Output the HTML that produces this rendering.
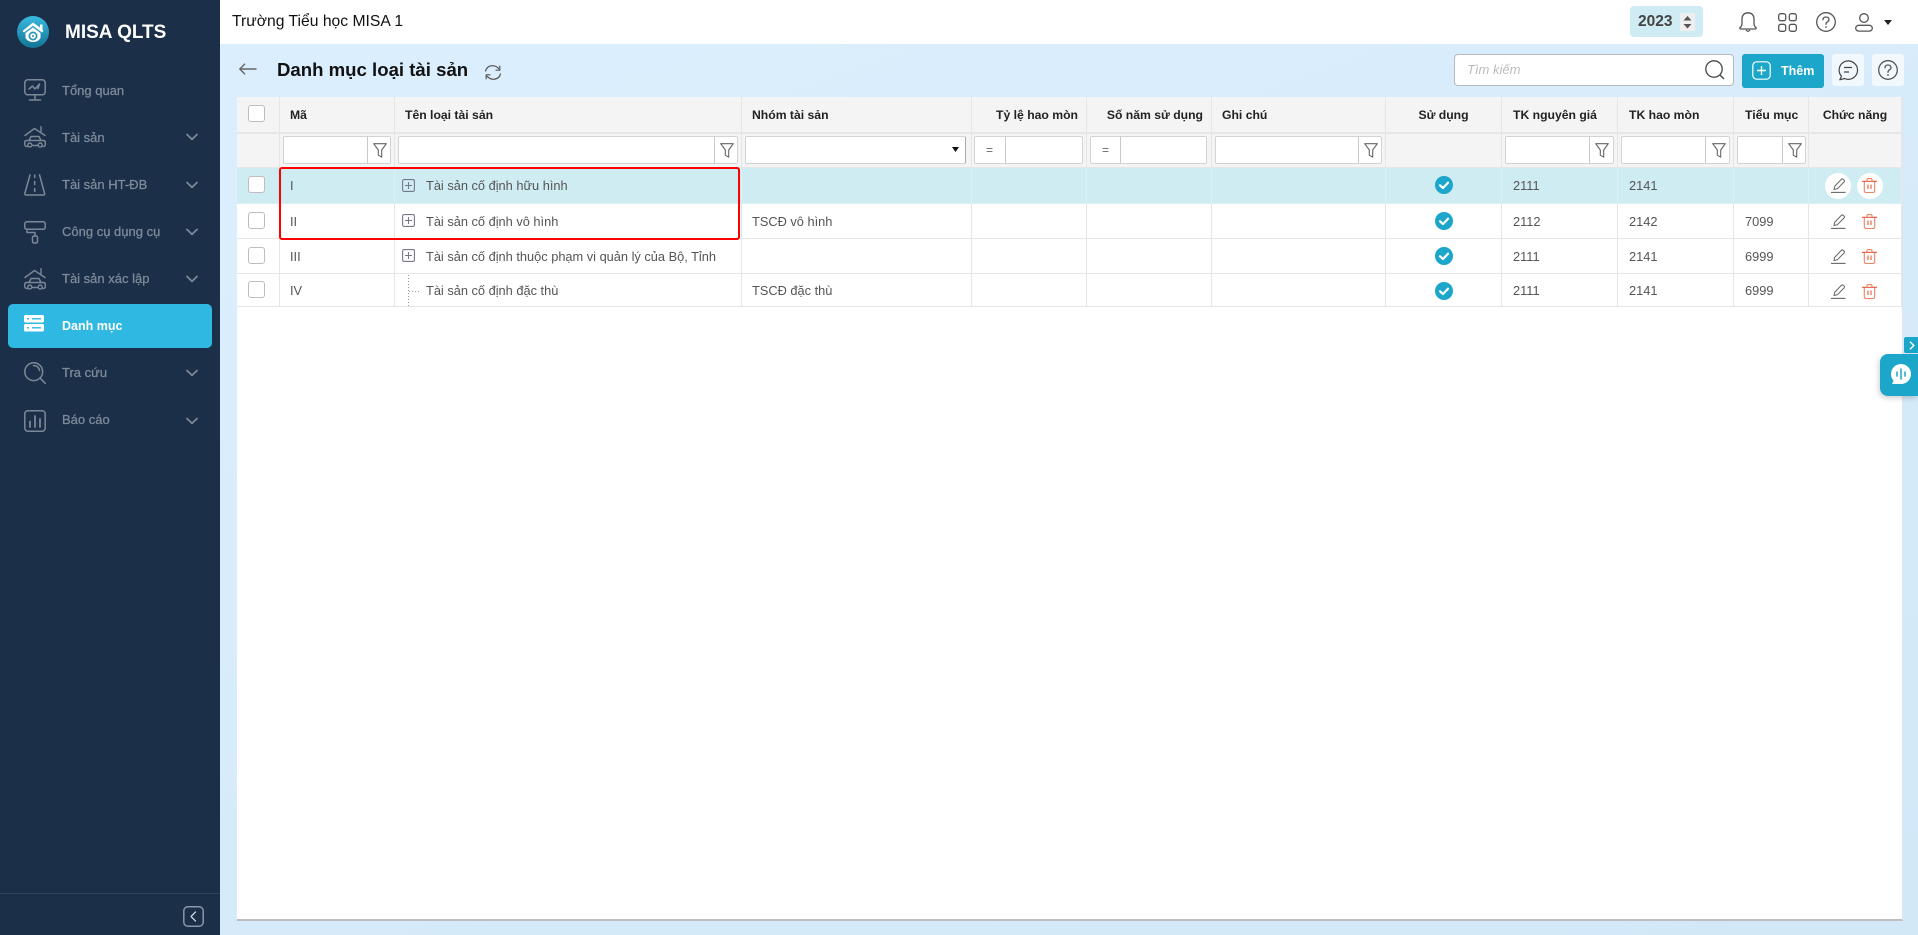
<!DOCTYPE html>
<html lang="vi">
<head>
<meta charset="utf-8">
<title>Danh mục loại tài sản</title>
<style>
*{box-sizing:border-box}
html,body{margin:0;padding:0}
body{position:relative;width:1918px;height:935px;overflow:hidden;background:linear-gradient(160deg,#dceffe,#d2e8f7);font-family:"Liberation Sans",sans-serif;color:#555}
.a{position:absolute}
.t{position:absolute;white-space:nowrap}
svg{position:absolute;overflow:visible;fill:none}
#side{left:0;top:0;width:220px;height:935px;background:#1b2f49}
.m{position:absolute;left:62px;font-size:13px;line-height:20px;color:#7f8b99;white-space:nowrap;-webkit-text-stroke:.25px #7f8b99}
.ic{stroke:#7c8896;stroke-width:1.5;stroke-linecap:round;stroke-linejoin:round}
#top{left:220px;top:0;width:1698px;height:44px;background:#fff}
#grid{position:absolute;left:237px;top:97px;width:1666px;height:824px;background:#fff;border-bottom:2px solid #bdbdbd;border-right:1px solid #e4e4e4}
table{border-collapse:separate;border-spacing:0;table-layout:fixed;width:1665px;font-size:12.8px}
td,th{padding:0 0 0 11px;border-right:1px solid #e6e6e6;border-bottom:1px solid #e6e6e6;white-space:nowrap;overflow:hidden;font-weight:400;text-align:left;vertical-align:middle;color:#555}
th{background:#f4f4f4;font-weight:700;color:#222;font-size:12.2px;border-bottom:2px solid #e6e6e6}
th:nth-child(3),th:nth-child(4),th:nth-child(7),td:nth-child(4){padding-left:10px}
.r{text-align:right;padding:0 8px 0 0}
.c{text-align:center;padding:0}
.fr td{background:#f4f4f4}
.sel td{background:#cfecf3;border-bottom-color:#d9eff5;border-right-color:#dbf0f5}
.f{position:absolute;top:136px;height:28px;background:#fff;border:1px solid #d3d3d3;border-radius:2px}
.f i{position:absolute;top:0;bottom:0;border-left:1px solid #c8c8c8}
.cb{position:absolute;left:248px;width:17px;height:17px;background:#fff;border:1px solid #bdbdbd;border-radius:3px}
.eq{position:absolute;top:142px;font-size:12px;line-height:16px;color:#666}
</style>
</head>
<body>
<svg width="0" height="0" style="position:absolute">
<defs>
<symbol id="fn" viewBox="0 0 14 15"><path d="M.7.7H13.3L8.7 7V14.2L5.3 12.2V7Z" fill="none" stroke="#666" stroke-width="1.1" stroke-linejoin="round"/></symbol>
<symbol id="pl" viewBox="0 0 13 13"><rect x=".6" y=".6" width="11.8" height="11.8" rx="1.5" fill="none" stroke="#77778c" stroke-width="1.1"/><path d="M6.5 3V10M3 6.5H10" stroke="#77778c" stroke-width="1.1"/></symbol>
<symbol id="ok" viewBox="0 0 18 18"><circle cx="9" cy="9" r="9" fill="#1ca6cb"/><path d="M5 9.3L8 12L13 6.7" fill="none" stroke="#fff" stroke-width="2.2" stroke-linecap="round" stroke-linejoin="round"/></symbol>
<symbol id="pen" viewBox="0 0 15 15"><path d="M3 11.5L3.700 8.300L10.300 1.400Q11.300.5 12.400 1.400L13 2Q14 3 13 4L6.300 10.800Z" fill="none" stroke="#666" stroke-width="1"/><path d="M0 14.400H14.500" stroke="#666" stroke-width="1.100"/></symbol>
<symbol id="tr" viewBox="0 0 15 15"><path d="M2.300 3.500V12.500Q2.300 14.500 4.300 14.500H10.700Q12.700 14.500 12.700 12.500V3.500" fill="none" stroke="#ee8265" stroke-width="1.100"/><path d="M0 3.300H15" stroke="#e6492a" stroke-width="1"/><path d="M5 3V1.800Q5 .6 6.200 .6H8.800Q10 .6 10 1.800V3" fill="none" stroke="#ee8265" stroke-width="1.100"/><path d="M6 6.500V11M9 6.500V11" stroke="#e6492a" stroke-width="1"/></symbol>
<symbol id="chev" viewBox="0 0 12 8"><path d="M1 1.500L6 6.300L11 1.500" fill="none" stroke="#7c8896" stroke-width="1.800" stroke-linecap="round" stroke-linejoin="round"/></symbol>
<symbol id="car" viewBox="0 0 22 22"><g fill="none" stroke="#7c8896" stroke-width="1.400" stroke-linecap="round" stroke-linejoin="round"><path d="M1 9.500L10.500 2.500L21 9.500M17 5.500V.7"/><path d="M5 14.500L7 10.500H15L17 14.500M3.500 20.500Q.7 20.500.7 18.500V16.500Q.7 14.500 3 14.500H19Q21.300 14.500 21.300 16.500V18.500Q21.300 20.500 19 20.500"/><circle cx="5.800" cy="19" r="2"/><circle cx="16.200" cy="19" r="2"/><path d="M8 19.500H14"/></g></symbol>
</defs>
</svg>

<div id="side" class="a">
  <svg style="left:17px;top:16px" width="32" height="32" viewBox="0 0 32 32">
    <defs><linearGradient id="lg" x1="0" y1="0" x2="0" y2="1"><stop offset="0" stop-color="#3bb9e0"/><stop offset="1" stop-color="#127594"/></linearGradient></defs>
    <circle cx="16" cy="16" r="16" fill="url(#lg)"/>
    <path d="M5.500 15L16 6.500L23 11.500V8.500H25.500V13.500L26.500 15L25 16.500L16 9.700L7 16.500Z" fill="#fff"/>
    <path d="M8.500 17L16 11.500L23.500 17V22Q21 26 16 26Q11 26 8.500 22Z" fill="#fff"/>
    <circle cx="16" cy="20" r="4.500" fill="#2a93b6"/>
    <circle cx="16" cy="20" r="2.800" fill="#fff"/><circle cx="16" cy="20" r="1" fill="#2a93b6"/>
  </svg>
  <div class="t" style="left:65px;top:22px;font-size:19px;line-height:22px;font-weight:700;color:#fff">MISA QLTS</div>

  <svg class="ic" style="left:24px;top:79px" width="22" height="22" viewBox="0 0 22 22"><rect x=".8" y=".8" width="20.400" height="15" rx="3"/><path d="M11 16V20.800M5.500 21H16.500M5 10L8.500 7L11 10L15.500 5L14 9.500"/></svg>
  <div class="m" style="top:81px">Tổng quan</div>

  <svg style="left:24px;top:126px" width="22" height="22"><use href="#car"/></svg>
  <div class="m" style="top:128px">Tài sản</div>
  <svg style="left:186px;top:133px" width="12" height="8"><use href="#chev"/></svg>

  <svg class="ic" style="left:24px;top:174px" width="22" height="22" viewBox="0 0 22 22"><path d="M6 .8L.8 19.500Q.7 21 2 21H19.500Q21 21 20.600 19.500L15.500 .8M10.700 1V3.500M10.700 7.500V10.500M10.700 14.500V17.500"/></svg>
  <div class="m" style="top:175px">Tài sản HT-ĐB</div>
  <svg style="left:186px;top:181px" width="12" height="8"><use href="#chev"/></svg>

  <svg class="ic" style="left:24px;top:221px" width="22" height="22" viewBox="0 0 22 22"><rect x=".8" y=".8" width="20.400" height="7.500" rx="2"/><path d="M3 8.500V11.500H11V15"/><rect x="8.500" y="15" width="5" height="7" rx="1.500"/></svg>
  <div class="m" style="top:222px">Công cụ dụng cụ</div>
  <svg style="left:186px;top:228px" width="12" height="8"><use href="#chev"/></svg>

  <svg style="left:24px;top:268px" width="22" height="22"><use href="#car"/></svg>
  <div class="m" style="top:269px">Tài sản xác lập</div>
  <svg style="left:186px;top:275px" width="12" height="8"><use href="#chev"/></svg>

  <div class="a" style="left:8px;top:304px;width:204px;height:44px;background:#2fb8e2;border-radius:5px"></div>
  <svg style="left:24px;top:315px" width="20" height="17" viewBox="0 0 20 17"><rect width="20" height="7.500" rx="1.500" fill="#fff"/><rect y="9" width="20" height="7.500" rx="1.500" fill="#fff"/><path d="M3 3.800H5M8 3.800H17M3 12.800H5M8 12.800H17" stroke="#2fb8e2" stroke-width="1.300"/></svg>
  <div class="m" style="top:316px;color:#fff;font-size:12.500px;font-weight:700;-webkit-text-stroke:0">Danh mục</div>

  <svg class="ic" style="left:24px;top:362px" width="22" height="22" viewBox="0 0 22 22"><circle cx="9.700" cy="9.700" r="8.900"/><path d="M16.200 16.200L21.200 21.300M9.500 3.500Q14.500 3.500 15.500 8.500"/></svg>
  <div class="m" style="top:363px">Tra cứu</div>
  <svg style="left:186px;top:369px" width="12" height="8"><use href="#chev"/></svg>

  <svg class="ic" style="left:24px;top:410px" width="22" height="22" viewBox="0 0 22 22"><rect x=".8" y=".8" width="20.400" height="20.400" rx="3"/><path d="M6 11.500V17M11 6V17M16 9V17" stroke-width="1.800"/></svg>
  <div class="m" style="top:410px">Báo cáo</div>
  <svg style="left:186px;top:417px" width="12" height="8"><use href="#chev"/></svg>

  <div class="a" style="left:0;top:893px;width:220px;height:1px;background:#2e435d"></div>
  <svg style="left:183px;top:906px" width="21" height="21" viewBox="0 0 21 21"><rect x=".8" y=".8" width="19.400" height="19.400" rx="4" stroke="#8b97a6" stroke-width="1.500"/><path d="M12.500 6L8 10.500L12.500 15" stroke="#c8d0da" stroke-width="1.300" stroke-linecap="round" stroke-linejoin="round"/></svg>
</div>

<div id="top" class="a"></div>
<div class="t" style="left:232px;top:12px;font-size:15.700px;line-height:20px;color:#111">Trường Tiểu học MISA 1</div>

<div class="a" style="left:1630px;top:6px;width:73px;height:31px;background:#cfebf3;border-radius:4px"></div>
<div class="t" style="left:1638px;top:13px;font-size:15.500px;line-height:18px;font-weight:700;color:#444">2023</div>
<div class="a" style="left:1680px;top:13px;width:15px;height:18px;background:#efefef"></div>
<svg style="left:1683px;top:16px" width="9" height="13" viewBox="0 0 9 13"><path d="M4.500 0L8.500 4.500H.5ZM.5 8H8.500L4.500 12.500Z" fill="#555"/></svg>

<svg style="left:1739px;top:12px" width="18" height="21" viewBox="0 0 18 21"><path d="M.8 15.800Q3 14.500 3 11V7.500Q3 1 9 .8Q15 1 15 7.500V11Q15 14.500 17.200 15.800Q17.500 17 16 17H2Q.5 17 .8 15.800ZM7 18Q9 20.500 11 18" stroke="#555" stroke-width="1.300" stroke-linejoin="round"/></svg>
<svg style="left:1778px;top:13px" width="19" height="19" viewBox="0 0 19 19"><g stroke="#555" stroke-width="1.300"><rect x=".7" y=".7" width="7" height="7" rx="2"/><rect x="11.300" y=".7" width="7" height="7" rx="2"/><rect x=".7" y="11.300" width="7" height="7" rx="2"/><rect x="11.300" y="11.300" width="7" height="7" rx="2"/></g></svg>
<svg style="left:1816px;top:12px" width="20" height="20" viewBox="0 0 20 20"><circle cx="10" cy="10" r="9.300" stroke="#555" stroke-width="1.300"/><path d="M7 7.800Q7 5 10 5Q13 5 13 7.600Q13 9 11.300 9.900Q10 10.600 10 12.300" stroke="#555" stroke-width="1.300" stroke-linecap="round"/><circle cx="10" cy="15" r=".9" fill="#555"/></svg>
<svg style="left:1855px;top:13px" width="18" height="19" viewBox="0 0 18 19"><circle cx="9" cy="5" r="4.300" stroke="#555" stroke-width="1.300"/><rect x=".7" y="12.300" width="16.600" height="5.800" rx="2.900" stroke="#555" stroke-width="1.300"/></svg>
<svg style="left:1884px;top:20px" width="8" height="5" viewBox="0 0 8 5"><path d="M0 0H8L4 5Z" fill="#222"/></svg>

<svg style="left:239px;top:63px" width="18" height="12" viewBox="0 0 18 12"><path d="M.8 6H17.500M6 .8L.8 6L6 11.200" stroke="#666" stroke-width="1.400" stroke-linejoin="round"/></svg>
<div class="t" style="left:277px;top:58px;font-size:18.600px;line-height:24px;font-weight:700;color:#111">Danh mục loại tài sản</div>
<svg style="left:484px;top:64px" width="18" height="17" viewBox="0 0 18 17"><path d="M1.500 7.500Q2.500 2 8.500 1.700Q12.500 1.700 15 5M16.500 9.500Q15.500 15 9.500 15.300Q5.500 15.300 3 12" stroke="#555" stroke-width="1.200"/><path d="M15.800 1.800V6.200H11.500M2.200 15.200V10.800H6.500" stroke="#555" stroke-width="1.200" stroke-linejoin="round"/></svg>

<div class="a" style="left:1454px;top:54px;width:280px;height:32px;background:#fff;border:1px solid #b7babd;border-radius:4px"></div>
<div class="t" style="left:1467px;top:62px;font-size:13px;line-height:16px;font-style:italic;color:#bbb">Tìm kiếm</div>
<svg style="left:1705px;top:60px" width="20" height="20" viewBox="0 0 20 20"><circle cx="9" cy="9" r="8.200" stroke="#444" stroke-width="1.300"/><path d="M15 15L19 19" stroke="#444" stroke-width="1.300"/></svg>
<div class="a" style="left:1742px;top:54px;width:82px;height:34px;background:#1ca6c9;border-radius:3px"></div>
<svg style="left:1752px;top:61px" width="19" height="19" viewBox="0 0 19 19"><rect x=".8" y=".8" width="17.400" height="17.400" rx="4" stroke="#fff" stroke-width="1.200"/><path d="M9.500 5V14M5 9.500H14" stroke="#fff" stroke-width="1.400"/></svg>
<div class="t" style="left:1781px;top:63px;font-size:12.500px;line-height:16px;font-weight:700;color:#fff">Thêm</div>
<div class="a" style="left:1832px;top:54px;width:32px;height:32px;background:#f2f9fe;border-radius:3px"></div>
<svg style="left:1838px;top:60px" width="20" height="21" viewBox="0 0 20 21"><path d="M3.500 16.300A9.200 9.200 0 1 1 6.500 18.500L1.800 19.800Z" stroke="#444" stroke-width="1.200" stroke-linejoin="round"/><path d="M6 7.500H14M6 12H11" stroke="#444" stroke-width="1.300"/></svg>
<div class="a" style="left:1872px;top:54px;width:32px;height:32px;background:#f2f9fe;border-radius:3px"></div>
<svg style="left:1878px;top:60px" width="20" height="20" viewBox="0 0 20 20"><circle cx="10" cy="10" r="9.300" stroke="#555" stroke-width="1.300"/><path d="M7 7.800Q7 5 10 5Q13 5 13 7.600Q13 9 11.300 9.900Q10 10.600 10 12.300" stroke="#555" stroke-width="1.300" stroke-linecap="round"/><circle cx="10" cy="15" r=".9" fill="#555"/></svg>

<div id="grid">
<table>
<colgroup><col style="width:43px"><col style="width:115px"><col style="width:347px"><col style="width:230px"><col style="width:115px"><col style="width:125px"><col style="width:174px"><col style="width:116px"><col style="width:116px"><col style="width:116px"><col style="width:75px"><col style="width:93px"></colgroup>
<tr style="height:37px"><th></th><th style="padding-left:10px">Mã</th><th>Tên loại tài sản</th><th>Nhóm tài sản</th><th class="r">Tỷ lệ hao mòn</th><th class="r">Số năm sử dụng</th><th>Ghi chú</th><th class="c">Sử dụng</th><th>TK nguyên giá</th><th>TK hao mòn</th><th>Tiểu mục</th><th class="c">Chức năng</th></tr>
<tr class="fr" style="height:34px"><td></td><td></td><td></td><td></td><td></td><td></td><td></td><td></td><td></td><td></td><td></td><td></td></tr>
<tr class="sel" style="height:36px"><td></td><td style="padding-left:10px">I</td><td style="padding-left:31px">Tài sản cố định hữu hình</td><td></td><td></td><td></td><td></td><td></td><td>2111</td><td>2141</td><td></td><td></td></tr>
<tr style="height:35px"><td></td><td style="padding-left:10px">II</td><td style="padding-left:31px">Tài sản cố định vô hình</td><td>TSCĐ vô hình</td><td></td><td></td><td></td><td></td><td>2112</td><td>2142</td><td>7099</td><td></td></tr>
<tr style="height:35px"><td></td><td style="padding-left:10px">III</td><td style="padding-left:31px">Tài sản cố định thuộc phạm vi quản lý của Bộ, Tỉnh</td><td></td><td></td><td></td><td></td><td></td><td>2111</td><td>2141</td><td>6999</td><td></td></tr>
<tr style="height:33px"><td></td><td style="padding-left:10px">IV</td><td style="padding-left:31px">Tài sản cố định đặc thù</td><td>TSCĐ đặc thù</td><td></td><td></td><td></td><td></td><td>2111</td><td>2141</td><td>6999</td><td></td></tr>
</table>
</div>

<!-- filter inputs -->
<div class="f" style="left:283px;width:108px"><i style="left:83px"></i></div><svg style="left:373px;top:143px" width="14" height="15"><use href="#fn"/></svg>
<div class="f" style="left:398px;width:340px"><i style="left:315px"></i></div><svg style="left:720px;top:143px" width="14" height="15"><use href="#fn"/></svg>
<div class="f" style="left:745px;width:221px;border-right:1px solid #aaa"></div><svg style="left:952px;top:147px" width="7" height="5" viewBox="0 0 7 5"><path d="M0 0H7L3.500 5Z" fill="#111"/></svg>
<div class="f" style="left:974px;width:109px"><i style="left:30px"></i></div><div class="eq" style="left:986px">=</div>
<div class="f" style="left:1090px;width:117px"><i style="left:29px"></i></div><div class="eq" style="left:1102px">=</div>
<div class="f" style="left:1215px;width:167px"><i style="left:142px"></i></div><svg style="left:1364px;top:143px" width="14" height="15"><use href="#fn"/></svg>
<div class="f" style="left:1505px;width:109px"><i style="left:83px"></i></div><svg style="left:1595px;top:143px" width="14" height="15"><use href="#fn"/></svg>
<div class="f" style="left:1621px;width:109px"><i style="left:83px"></i></div><svg style="left:1712px;top:143px" width="14" height="15"><use href="#fn"/></svg>
<div class="f" style="left:1737px;width:69px"><i style="left:44px"></i></div><svg style="left:1788px;top:143px" width="14" height="15"><use href="#fn"/></svg>

<!-- checkboxes -->
<div class="cb" style="top:105px"></div>
<div class="cb" style="top:176px"></div>
<div class="cb" style="top:212px"></div>
<div class="cb" style="top:247px"></div>
<div class="cb" style="top:281px"></div>

<!-- tree -->
<svg style="left:402px;top:179px" width="13" height="13"><use href="#pl"/></svg>
<svg style="left:402px;top:214px" width="13" height="13"><use href="#pl"/></svg>
<svg style="left:402px;top:249px" width="13" height="13"><use href="#pl"/></svg>
<svg style="left:405px;top:275px" width="16" height="32" viewBox="0 0 16 32"><path d="M3.500 0V31M4 16.500H14" stroke="#999" stroke-width="1" stroke-dasharray="1 2"/></svg>

<!-- used -->
<svg style="left:1435px;top:176px" width="18" height="18"><use href="#ok"/></svg>
<svg style="left:1435px;top:212px" width="18" height="18"><use href="#ok"/></svg>
<svg style="left:1435px;top:247px" width="18" height="18"><use href="#ok"/></svg>
<svg style="left:1435px;top:282px" width="18" height="18"><use href="#ok"/></svg>

<!-- actions -->
<div class="a" style="left:1825px;top:173px;width:26px;height:26px;border-radius:50%;background:#fff"></div>
<div class="a" style="left:1857px;top:173px;width:26px;height:26px;border-radius:50%;background:#fff"></div>
<svg style="left:1831px;top:178px" width="15" height="15"><use href="#pen"/></svg>
<svg style="left:1862px;top:178px" width="15" height="15"><use href="#tr"/></svg>
<svg style="left:1831px;top:214px" width="15" height="15"><use href="#pen"/></svg>
<svg style="left:1862px;top:214px" width="15" height="15"><use href="#tr"/></svg>
<svg style="left:1831px;top:249px" width="15" height="15"><use href="#pen"/></svg>
<svg style="left:1862px;top:249px" width="15" height="15"><use href="#tr"/></svg>
<svg style="left:1831px;top:284px" width="15" height="15"><use href="#pen"/></svg>
<svg style="left:1862px;top:284px" width="15" height="15"><use href="#tr"/></svg>

<!-- red highlight -->
<div class="a" style="left:279px;top:167px;width:461px;height:73px;border:2px solid #f00;border-radius:3px"></div>

<!-- chat widget -->
<div class="a" style="left:1904px;top:337px;width:14px;height:16px;background:#1ca6c9;border-radius:2px 0 0 2px"></div>
<svg style="left:1909px;top:341px" width="6" height="9" viewBox="0 0 6 9"><path d="M1 .8L4.800 4.500L1 8.200" stroke="#fff" stroke-width="1.400"/></svg>
<div class="a" style="left:1880px;top:354px;width:38px;height:42px;background:#1ca6c9;border-radius:8px 0 0 8px;box-shadow:-1px 2px 6px rgba(0,0,0,.2)"></div>
<svg style="left:1891px;top:364px" width="20" height="21" viewBox="0 0 20 21"><circle cx="10" cy="10" r="10" fill="#fff"/><path d="M1 20H8V16H3Z" fill="#fff"/><path d="M6 8V12M10 5V15M14 8V12" stroke="#1ca6c9" stroke-width="1.500" stroke-linecap="round"/></svg>
</body>
</html>
